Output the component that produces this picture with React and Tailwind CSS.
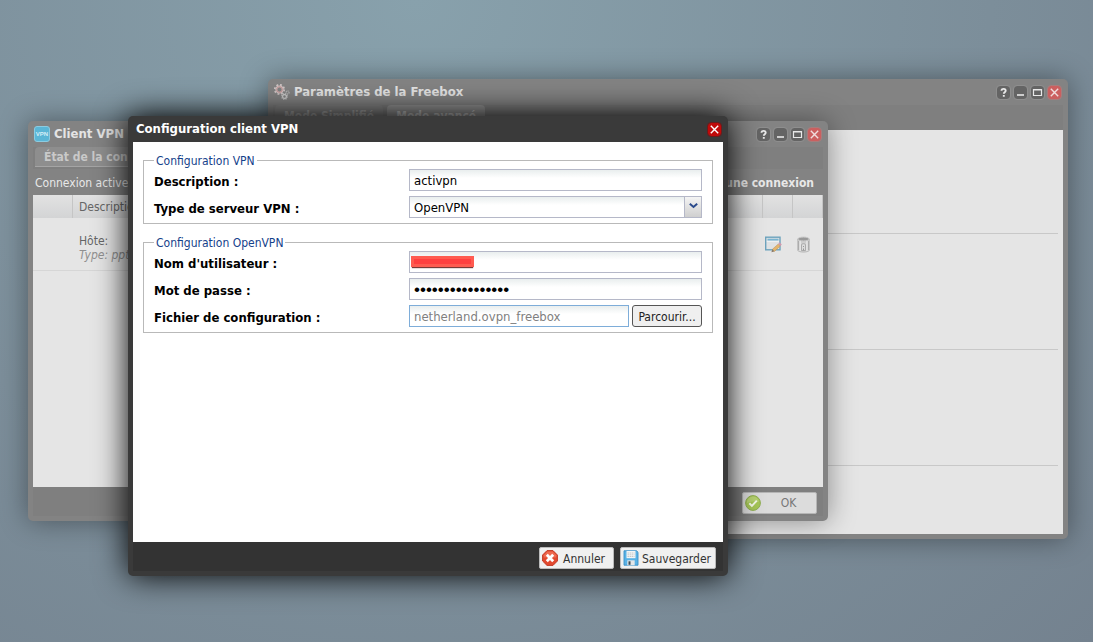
import clsx from 'clsx';

function GearsIcon() {
  return (
    <svg width="16" height="16" viewBox="0 0 16 16" fill="none" aria-hidden="true">
      <circle cx="5.500" cy="5.500" r="4.700" stroke="#d0c6c6" strokeWidth="1.800" strokeDasharray="1.850 1.840" />
      <circle cx="5.500" cy="5.500" r="3.200" stroke="#d3c8c8" strokeWidth="1.800" />
      <circle cx="5.500" cy="5.500" r="2.900" stroke="#c48d8d" strokeWidth=".9" />
      <circle cx="10.500" cy="12.500" r="2.800" stroke="#c2c2c2" strokeWidth="1.400" strokeDasharray="1.100 1.100" />
      <circle cx="10.500" cy="12.500" r="1.900" stroke="#cfcfcf" strokeWidth="1.200" />
      <circle cx="13.500" cy="8.500" r="1.500" stroke="#b4b4b4" strokeWidth="1.300" strokeDasharray="1 .6" />
    </svg>
  );
}

function VpnIcon() {
  return (
    <span className="flex h-4 w-4 items-center justify-center rounded-[3px] border border-[#8ccbe0] bg-[#5bb6d6] font-['Liberation_Sans',sans-serif] text-[6px] font-bold leading-none text-[#d5eef6]">
      VPN
    </span>
  );
}

const glyphs = {
  help: <path d="M4.500 4.800c0-2.600 4.200-2.600 4.200 0 0 1.400-1.900 1.500-1.900 3M6.800 9v1.700" stroke="currentColor" strokeWidth="1.900" />,
  minimize: <path d="M3 9h7" stroke="currentColor" strokeWidth="1.600" />,
  maximize: <path d="M2.500 3.500h8v6h-8zM2.500 4h8" stroke="currentColor" strokeWidth="1.200" />,
  close: <path d="M2.800 2.800l7.400 7.400M10.200 2.800l-7.400 7.400" stroke="currentColor" strokeWidth="1.400" />,
};

const toolLabels = { help: 'Aide', minimize: 'Réduire', maximize: 'Agrandir', close: 'Fermer' };

function Tool({ type, active }) {
  return (
    <button
      type="button"
      aria-label={toolLabels[type]}
      className={clsx(
        'h-[13px] w-[13px] rounded-[3px]',
        type !== 'close' && 'bg-[#646464] text-[#e8e8e8] outline outline-[#8e8e8e]',
        type === 'close' && !active && 'bg-[#cb5f5f] text-[#f0dcdc] outline outline-[#a87c7c]',
        type === 'close' && active && 'bg-[#c00a0a] text-white outline outline-[#6b1c1c]'
      )}
    >
      <svg width="13" height="13" viewBox="0 0 13 13" fill="none" aria-hidden="true">
        {glyphs[type]}
      </svg>
    </button>
  );
}

function Window({ title, icon, tools, active, className, children }) {
  return (
    <section
      className={clsx(
        'absolute rounded-[5px] px-[5px] pb-[5px]',
        active ? 'bg-[#3a3a3a] shadow-[0_0_32px_#000]' : 'bg-[#838383] shadow-[0_0_28px_rgba(0,0,0,0.4)]',
        className
      )}
    >
      <header className={clsx('flex h-[26px] items-center justify-between pr-[2px]', active ? 'pl-[3px]' : 'pl-px')}>
        <h2 className={clsx('flex items-center gap-1 text-[13px] font-bold', active ? 'text-white' : 'text-[#e4e4e4]')}>
          {icon}
          {title}
        </h2>
        <div className="flex gap-1">
          {tools.map((t) => (
            <Tool key={t} type={t} active={active} />
          ))}
        </div>
      </header>
      {children}
    </section>
  );
}

function SettingsWindow() {
  return (
    <Window
      title="Paramètres de la Freebox"
      icon={<GearsIcon />}
      tools={['help', 'minimize', 'maximize', 'close']}
      className="left-[268px] top-[79px] w-[800px]"
    >
      <div className="flex h-[25px] gap-1 bg-[#7f7f7f] pl-[2px] text-[12px] font-bold">
        <button type="button" className="h-[22px] rounded-t-[4px] bg-[#858585] px-[9px] text-[#a8a8a8]">Mode Simplifié</button>
        <button type="button" className="h-[22px] rounded-t-[4px] bg-[#959595] px-[9px] text-[#c4c4c4]">Mode avancé</button>
      </div>
      <div className="bg-[#e5e5e5] px-[5px] pb-[68px]">
        <div className="h-[104px] border-b border-[#c8c8c8]" />
        <div className="h-[116px] border-b border-[#c8c8c8]" />
        <div className="h-[116px] border-b border-[#c8c8c8]" />
      </div>
    </Window>
  );
}

function EditIcon() {
  return (
    <svg width="17" height="17" viewBox="0 0 17 17" fill="none" aria-hidden="true">
      <rect x=".7" y="1.200" width="14.300" height="12.600" fill="#dfe2e4" stroke="#6da3bd" strokeWidth="1.400" />
      <path d="M2.500 3.700h11" stroke="#79b4d0" strokeWidth="2" />
      <path d="M1.800 5.300h12.200" stroke="#f2f4f5" />
      <path d="M7.400 13.300l6-5.400 2 2.100-6 5.400z" fill="#e3b56c" stroke="#b98d53" strokeWidth=".5" />
      <path d="M13.300 7.900l1.300-1.600 2.200 2.100-1.500 1.600z" fill="#cf9ab0" />
      <path d="M7.400 13.300l-1 2.900 3-.8z" fill="#8a7a68" />
    </svg>
  );
}

function TrashIcon() {
  return (
    <svg width="13" height="17" viewBox="0 0 13 17" fill="none" aria-hidden="true">
      <path d="M.7 3h11.600v11.500c-1.800 2.200-9.800 2.200-11.600 0z" fill="#cfcfcf" stroke="#b0b0b0" strokeWidth=".7" />
      <path d="M3.200 5v10M9.900 5v10" stroke="#e6e6e6" strokeWidth="1.400" />
      <path d="M1.500 5v9M11.500 5v9" stroke="#a5a5a5" strokeWidth=".8" />
      <ellipse cx="6.500" cy="3" rx="5.600" ry="1.900" fill="#999" stroke="#c6c6c6" />
      <path d="M4.500 14.500V8.800c0-1.500 4-1.500 4 0v5.700z" fill="#dcdcdc" stroke="#a0a0a0" strokeWidth=".8" />
      <path d="M6.500 10v1M6.500 12.500v2" stroke="#999" />
    </svg>
  );
}

function OkIcon() {
  return (
    <svg width="16" height="16" viewBox="0 0 16 16" fill="none" aria-hidden="true">
      <circle cx="8" cy="8" r="7.400" fill="#a6c657" stroke="#8fae52" />
      <path d="M2 8a6 6 0 0 1 12-1c-4-1.500-8 0-12 1z" fill="#b7d272" />
      <path d="M4.300 8.200l2.600 2.700 4.900-5.300" stroke="#f5f8ea" strokeWidth="2" />
    </svg>
  );
}

function CancelIcon() {
  return (
    <svg width="16" height="16" viewBox="0 0 16 16" fill="none" aria-hidden="true">
      <path d="M5 .6h6L15.400 5v6L11 15.400H5L.6 11V5z" fill="#e2492f" stroke="#c33a25" strokeLinejoin="round" />
      <path d="M5.300 1.600h5.400L14.300 5.300v2.200H1.700V5.300z" fill="#ee6a50" />
      <path d="M4.800 4.800l6.400 6.400M11.200 4.800l-6.400 6.400" stroke="#fff" strokeWidth="2.800" />
    </svg>
  );
}

function SaveIcon() {
  return (
    <svg width="16" height="16" viewBox="0 0 16 16" fill="none" aria-hidden="true">
      <path d="M1 .8h12.600l1.400 1.400v13H1z" fill="#58b2e6" stroke="#3b8fc6" strokeWidth=".9" />
      <path d="M3.500 1h9v7.200h-9z" fill="#f3f5f6" />
      <path d="M4.500 3h7M4.500 4.800h7M4.500 6.500h7" stroke="#b9bcbe" strokeWidth=".8" strokeDasharray="1.500 .6" />
      <path d="M4.300 10.300h7.400v5H4.300z" fill="#e3e6e8" />
      <path d="M5.500 11.300h2v3.500h-2z" fill="#3c4a54" />
    </svg>
  );
}

function ClientWindow() {
  return (
    <Window
      title="Client VPN"
      icon={<VpnIcon />}
      tools={['help', 'minimize', 'maximize', 'close']}
      className="left-[28px] top-[121px] w-[800px]"
    >
      <div className="flex h-[22px] bg-[#7f7f7f] pl-[2px] text-[12px] font-bold">
        <button type="button" className="h-5 rounded-t-[4px] border-b border-[#a5a5a5] bg-[#8e8e8e] px-[9px] text-[#c9c9c9]">État de la connexion</button>
      </div>
      <div className="flex h-[26px] items-center justify-between pl-[2px] pr-[9px] pt-[2px] text-[12px] text-[#e8e8e8]">
        <span>Connexion active</span>
        <button type="button" className="font-bold">Ajouter une connexion</button>
      </div>
      <div className="h-[292px] bg-[#e5e5e5]">
        <table className="w-full table-fixed border-separate border-spacing-0 text-left text-[12px] text-[#666]">
          <thead>
            <tr className="h-[23px] bg-linear-to-b from-[#e2e2e2] to-[#d3d4d5]">
              <th className="w-10 border-r border-[#c5c5c5] p-0" />
              <th className="border-r border-[#c5c5c5] py-0 pl-[6px] font-normal">Description</th>
              <th className="w-[30px] border-r border-[#c5c5c5] p-0" />
              <th className="w-[30px] border-r border-[#c5c5c5] p-0" />
            </tr>
          </thead>
          <tbody>
            <tr className="h-[53px]">
              <td className="border-b border-[#d6d6d6]" />
              <td className="border-b border-[#d6d6d6] pl-[6px] pt-2 leading-[14px]">
                Hôte:
                <br />
                <em className="text-[#909090]">Type: pptp</em>
              </td>
              <td className="border-b border-[#d6d6d6] pl-[2px]">
                <button type="button" aria-label="Modifier" className="block"><EditIcon /></button>
              </td>
              <td className="border-b border-[#d6d6d6] pl-1">
                <button type="button" aria-label="Supprimer" className="block"><TrashIcon /></button>
              </td>
            </tr>
          </tbody>
        </table>
      </div>
      <footer className="flex h-[29px] items-center justify-end bg-[#7f7f7f] pr-[6px] pt-[2px]">
        <button type="button" className="flex h-[22px] w-[75px] items-center rounded-[2px] border border-[#b5b5b5] bg-[#dcdcdc] pl-[2px] text-[12px] text-[#777]">
          <OkIcon />
          <span className="grow pt-px text-center">OK</span>
        </button>
      </footer>
    </Window>
  );
}

function Field({ id, label, children }) {
  return (
    <div className="flex h-[22px] items-center">
      <label htmlFor={id} className="w-[255px] shrink-0 pt-[3px] text-[13px] font-bold text-black">{label} :</label>
      <div className="relative flex min-w-0 grow gap-[3px]">{children}</div>
    </div>
  );
}

const inputClass =
  'h-[22px] w-full min-w-0 appearance-none border bg-white bg-linear-to-b from-[#e9eeee] to-white to-[8px] px-1 pt-px outline-none';
const plainInput = clsx(inputClass, 'border-[#b5b8c8] text-[13px] text-black');

const buttonClass =
  'flex h-[22px] items-center rounded-[2px] border border-[#bbb] bg-[#f0f0f0] pl-[2px] text-[12px] text-[#333]';

function Group({ title, children }) {
  return (
    <fieldset className="min-w-0 border border-[#b9b9b9] px-[10px] pb-[5px]">
      <legend className="h-4 px-[2px] text-[12px] leading-[18px] text-[#15428b]">{title}</legend>
      <div className="flex flex-col gap-[5px] pt-px">{children}</div>
    </fieldset>
  );
}

function ConfigDialog() {
  return (
    <Window active title="Configuration client VPN" tools={['close']} className="left-[128px] top-[116px] w-[600px]">
      <form className="flex min-h-[400px] flex-col gap-[10px] bg-white p-[10px]">
        <Group title="Configuration VPN">
          <Field id="description" label="Description">
            <input id="description" type="text" defaultValue="activpn" className={plainInput} />
          </Field>
          <Field id="server-type" label="Type de serveur VPN">
            <select id="server-type" defaultValue="openvpn" className={plainInput}>
              <option value="openvpn">OpenVPN</option>
              <option value="pptp">PPTP</option>
            </select>
            <span className="pointer-events-none absolute inset-y-px right-px flex w-[17px] items-start justify-center border-l border-[#b5b8c8] bg-linear-to-b from-[#f4f4f4] to-[#cfcfcf] pt-[6px]">
              <svg width="9" height="6" viewBox="0 0 9 6" fill="none" aria-hidden="true">
                <path d="M.8.8l3.700 3.200L8.200.8" stroke="#2b4a8c" strokeWidth="2" />
              </svg>
            </span>
          </Field>
        </Group>
        <Group title="Configuration OpenVPN">
          <Field id="username" label="Nom d'utilisateur">
            <input id="username" type="text" className={plainInput} />
            <span className="pointer-events-none absolute left-[2px] top-[5px] h-[11px] w-[63px] border-[3px] border-[#ff5b50] bg-[#ff4040] shadow-[0_2px_1px_-1px_#7a3a38]" />
          </Field>
          <Field id="password" label="Mot de passe">
            <input
              id="password"
              type="password"
              defaultValue="motdepassevpn123"
              className={clsx(inputClass, "border-[#b5b8c8] font-['Liberation_Sans',sans-serif] text-[17px] text-black")}
            />
          </Field>
          <Field id="config-file" label="Fichier de configuration">
            <input
              id="config-file"
              type="text"
              readOnly
              value="netherland.ovpn_freebox"
              className={clsx(inputClass, 'border-[#7eadd9] text-[13px] text-[#808080]')}
            />
            <button type="button" className="h-[22px] w-[70px] shrink-0 rounded-[3px] border border-[#555] bg-[#efefef] pt-px text-[12px] text-[#222]">
              Parcourir...
            </button>
          </Field>
        </Group>
      </form>
      <footer className="flex h-[29px] items-center justify-end gap-[6px] bg-[#333] pr-[7px] pt-[3px]">
        <button type="button" className={clsx(buttonClass, 'gap-[5px] pr-2')}>
          <CancelIcon />
          <span className="pt-px">Annuler</span>
        </button>
        <button type="button" className={clsx(buttonClass, 'gap-[3px] pr-1')}>
          <SaveIcon />
          <span className="pt-px">Sauvegarder</span>
        </button>
      </footer>
    </Window>
  );
}

export default function App() {
  return (
    <main className="relative min-h-screen overflow-hidden bg-[#778692] bg-[radial-gradient(ellipse_at_38%_0%,#88a1ac_0%,#7c8e9a_60%,#74828f_100%)] font-['DejaVu_Sans_Condensed','Noto_Sans',sans-serif]">
      <SettingsWindow />
      <ClientWindow />
      <ConfigDialog />
    </main>
  );
}
